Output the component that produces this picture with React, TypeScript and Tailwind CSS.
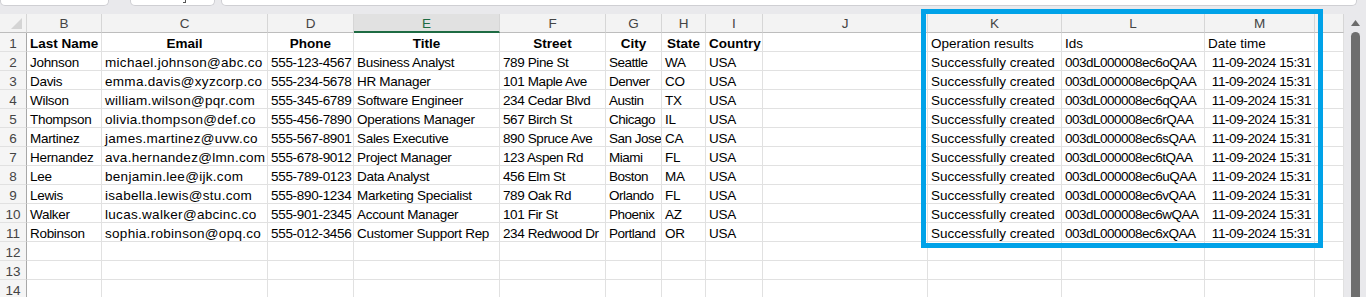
import React from 'react';

type Row = string[];

const letters = ['B', 'C', 'D', 'E', 'F', 'G', 'H', 'I', 'J', 'K', 'L', 'M', ''];

const headers = ['Last Name', 'Email', 'Phone', 'Title', 'Street', 'City', 'State', 'Country'];
const headerAlign = ['text-left', 'text-center', 'text-center', 'text-center', 'text-center', 'text-center', 'text-center', 'text-left'];

// per-column tracking to approximate Excel's Aptos widths
const track = [
    'tracking-[-0.3px]',
    'tracking-[0.3px]',
    'tracking-[-0.3px]',
    'tracking-[-0.3px]',
    'tracking-[-0.4px]',
    'tracking-[-0.5px]',
    'tracking-[-0.3px]',
    'tracking-[-0.3px]',
];

const rows: Row[] = [
    ['Johnson', 'michael.johnson@abc.co', '555-123-4567', 'Business Analyst', '789 Pine St', 'Seattle', 'WA', 'USA', '003dL000008ec6oQAA'],
    ['Davis', 'emma.davis@xyzcorp.co', '555-234-5678', 'HR Manager', '101 Maple Ave', 'Denver', 'CO', 'USA', '003dL000008ec6pQAA'],
    ['Wilson', 'william.wilson@pqr.com', '555-345-6789', 'Software Engineer', '234 Cedar Blvd', 'Austin', 'TX', 'USA', '003dL000008ec6qQAA'],
    ['Thompson', 'olivia.thompson@def.co', '555-456-7890', 'Operations Manager', '567 Birch St', 'Chicago', 'IL', 'USA', '003dL000008ec6rQAA'],
    ['Martinez', 'james.martinez@uvw.co', '555-567-8901', 'Sales Executive', '890 Spruce Ave', 'San Jose', 'CA', 'USA', '003dL000008ec6sQAA'],
    ['Hernandez', 'ava.hernandez@lmn.com', '555-678-9012', 'Project Manager', '123 Aspen Rd', 'Miami', 'FL', 'USA', '003dL000008ec6tQAA'],
    ['Lee', 'benjamin.lee@ijk.com', '555-789-0123', 'Data Analyst', '456 Elm St', 'Boston', 'MA', 'USA', '003dL000008ec6uQAA'],
    ['Lewis', 'isabella.lewis@stu.com', '555-890-1234', 'Marketing Specialist', '789 Oak Rd', 'Orlando', 'FL', 'USA', '003dL000008ec6vQAA'],
    ['Walker', 'lucas.walker@abcinc.co', '555-901-2345', 'Account Manager', '101 Fir St', 'Phoenix', 'AZ', 'USA', '003dL000008ec6wQAA'],
    ['Robinson', 'sophia.robinson@opq.co', '555-012-3456', 'Customer Support Rep', '234 Redwood Dr', 'Portland', 'OR', 'USA', '003dL000008ec6xQAA'],
];

const cell = 'h-[19px] border-r border-b border-[#e1e1e1] px-[3px] pt-[2px] whitespace-nowrap overflow-hidden leading-[18px]';
const rowHead = 'h-[19px] border-r border-b border-r-[#a8a8a8] border-b-[#e1e1e1] bg-[#f5f5f5] text-center text-[#444] pt-[2px] leading-[18px]';

const App: React.FC = () => {
    return (
        <div className="relative w-[1366px] h-[297px] overflow-hidden bg-[#e9e9ec] text-[13.5px] text-black font-['Liberation_Sans',Arial,sans-serif]">
            {/* formula bar strip */}
            <div className="flex h-[14px] gap-[6px]">
                <div className="w-[109px] h-[6px] bg-white border border-t-0 border-[#cfcfd3] rounded-b-[5px]"></div>
                <div className="ml-[15px] w-[85px] h-[6px] bg-white border border-t-0 border-[#cfcfd3] rounded-b-[5px] flex justify-center">
                    <div className="ml-[24px] w-[3px] h-[3px] border-b border-r border-[#555]"></div>
                </div>
                <div className="w-[1136px] h-[6px] bg-white border border-t-0 border-[#cfcfd3] rounded-b-[5px]"></div>
            </div>

            <div className="flex items-start">
                <div className="w-[1344px] bg-white grid auto-rows-[19px] grid-cols-[27px_75px_166px_86px_146px_106px_56px_44px_57px_165px_134px_143px_110px_1fr]">
                    {/* column letters */}
                    <div className="h-[19px] bg-[#f3f3f3] border-r border-b border-r-[#d6d6d6] border-b-[#bdbdbd] flex items-end justify-end pr-[4px] pb-[3px]">
                        <svg width="11" height="11" viewBox="0 0 11 11">
                            <polygon points="11,0 11,11 0,11" fill="#d4d4d4" />
                        </svg>
                    </div>
                    {letters.map((l, i) => (
                        <div
                            key={i}
                            className={
                                l === 'E'
                                    ? 'h-[19px] bg-[#e1e1e1] border-r border-b-2 border-r-[#d6d6d6] border-b-[#1e6b43] text-center text-[#1e6b43] pt-[2px] leading-[16px]'
                                    : 'h-[19px] bg-[#f3f3f3] border-r border-b border-r-[#d6d6d6] border-b-[#bdbdbd] text-center text-[#444] pt-[2px] leading-[16px]'
                            }
                        >
                            {l}
                        </div>
                    ))}

                    {/* row 1 */}
                    <div className={rowHead}>1</div>
                    {headers.map((h, i) => (
                        <div key={i} className={`${cell} font-bold ${headerAlign[i]}`}>{h}</div>
                    ))}
                    <div className={cell}></div>
                    <div className={cell}>Operation results</div>
                    <div className={cell}>Ids</div>
                    <div className={cell}>Date time</div>
                    <div className={cell}></div>

                    {rows.map((r, ri) => (
                        <React.Fragment key={ri}>
                            <div className={rowHead}>{ri + 2}</div>
                            {r.slice(0, 8).map((v, ci) => (
                                <div key={ci} className={`${cell} ${track[ci]}`}>{v}</div>
                            ))}
                            <div className={cell}></div>
                            <div className={cell}>Successfully created</div>
                            <div className={`${cell} tracking-[-0.5px]`}>{r[8]}</div>
                            <div className={`${cell} text-right tracking-[-0.4px]`}>11-09-2024 15:31</div>
                            <div className={cell}></div>
                        </React.Fragment>
                    ))}

                    {[12, 13, 14].map((n) => (
                        <React.Fragment key={n}>
                            <div className={rowHead}>{n}</div>
                            {letters.map((_, ci) => (
                                <div key={ci} className={cell}></div>
                            ))}
                        </React.Fragment>
                    ))}
                </div>

                {/* vertical scrollbar */}
                <div className="w-[22px] h-[283px] flex flex-col items-center pt-[6px] pl-[1px]">
                    <svg width="9" height="6" viewBox="0 0 9 6">
                        <polygon points="4.5,0 9,6 0,6" fill="#6b6b6b" />
                    </svg>
                    <div className="mt-[6px] w-[9px] flex-1 bg-[#6e6e6e] rounded-t-full"></div>
                </div>
            </div>

            {/* selection outline */}
            <div className="absolute left-[921px] top-[9px] w-[402px] h-[239px] border-[5px] border-[#00a2e8] pointer-events-none"></div>
        </div>
    );
};

export default App;
